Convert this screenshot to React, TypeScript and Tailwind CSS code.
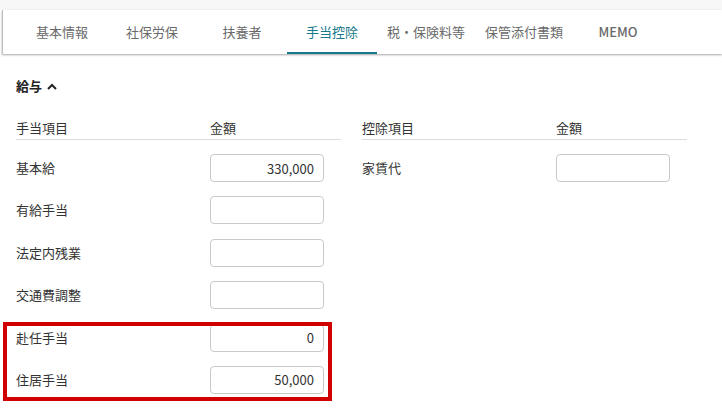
import React from "react";

const TABS = ["基本情報", "社保労保", "扶養者", "手当控除", "税・保険料等", "保管添付書類", "MEMO"];
const ACTIVE = "手当控除";

const ALLOWANCES: { label: string; value: string }[] = [
  { label: "基本給", value: "330,000" },
  { label: "有給手当", value: "" },
  { label: "法定内残業", value: "" },
  { label: "交通費調整", value: "" },
  { label: "赴任手当", value: "0" },
  { label: "住居手当", value: "50,000" },
];
const DEDUCTIONS = [{ label: "家賃代", value: "" }];

function AmountInput({ value }: { value: string }) {
  return (
    <input
      readOnly
      value={value}
      className="w-[114px] h-[28px] rounded-[4px] border border-[#c9c9c9] bg-white px-[9px] text-right text-[13px] text-[#333] outline-none"
    />
  );
}

function ItemTable({ head, rows }: { head: string; rows: { label: string; value: string }[] }) {
  return (
    <div className="w-[325px]">
      <div className="flex h-[24px] items-center border-b border-[#dcdcdc] text-[13px] text-[#333]">
        <span className="w-[194px]">{head}</span>
        <span>金額</span>
      </div>
      <div className="flex flex-col gap-[14.4px] pt-[14px]">
        {rows.map(r => (
          <div key={r.label} className="flex h-[28px] items-center text-[13px] text-[#333]">
            <span className="w-[194px]">{r.label}</span>
            <AmountInput value={r.value} />
          </div>
        ))}
      </div>
    </div>
  );
}

export default function App() {
  return (
    <div className="relative min-h-screen bg-white font-['Noto_Sans_CJK_JP','Noto_Sans',sans-serif] leading-[20px]">
      <div className="h-[10px] bg-[#f7f7f7]" />
      <nav className="ml-[2px] flex h-[44px] bg-white pl-[14px] border-l border-[#bdbdbd] shadow-[0_1px_2px_rgba(0,0,0,0.35)]">
        {TABS.map(t => (
          <div
            key={t}
            className={`flex h-full min-w-[90px] items-center justify-center px-[10px] pt-[2px] text-[13px] border-b-2 ${t === ACTIVE ? "border-[#17798a] text-[#17798a]" : "border-transparent text-[#6a6a6a]"} ${t === "MEMO" ? "font-medium" : ""}`}
          >
            {t}
          </div>
        ))}
      </nav>

      <section className="px-4 pt-[22px]">
        <div className="flex h-[20px] items-center gap-[5px] text-[13px] font-bold text-[#222]">
          <span>給与</span>
          <svg width="10" height="7" viewBox="0 0 10 7" fill="none">
            <polyline points="1,6 5,2 9,6" stroke="#222" strokeWidth="2" />
          </svg>
        </div>
        <div className="mt-[20px] flex gap-[21px]">
          <ItemTable head="手当項目" rows={ALLOWANCES} />
          <ItemTable head="控除項目" rows={DEDUCTIONS} />
        </div>
      </section>

      {/* highlight around 赴任手当 / 住居手当 */}
      <div className="pointer-events-none absolute left-[3px] top-[322px] h-[79px] w-[329px] border-4 border-[#d10000]" />
    </div>
  );
}
